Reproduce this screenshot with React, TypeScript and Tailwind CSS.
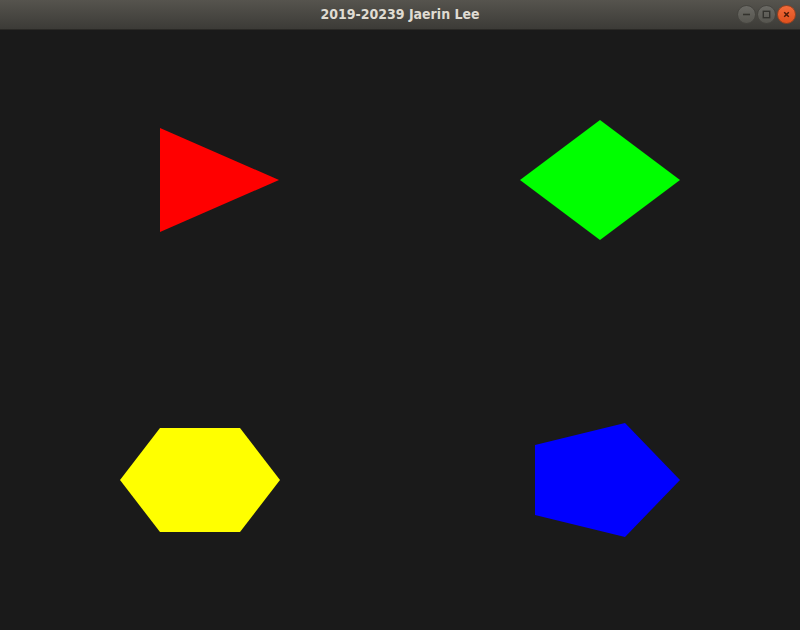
// Window with an OpenGL-style canvas of four filled polygons
const shapes = [
  { fill: "#ff0000", points: "160,98 279,150 160,202" },
  { fill: "#00ff00", points: "600,90 680,150 600,210 520,150" },
  { fill: "#ffff00", points: "160,398 240,398 280,450 240,502 160,502 120,450" },
  { fill: "#0000ff", points: "535,415 625,393 680,450 625,507 535,485" },
];

const TitleButton = ({ kind }: { kind: "min" | "max" | "close" }) => (
  <div
    className={
      kind === "close"
        ? "flex h-[19px] w-[19px] items-center justify-center rounded-full border border-[#9a4220] bg-gradient-to-b from-[#f26b3a] to-[#e0501c]"
        : "flex h-[19px] w-[19px] items-center justify-center rounded-full border border-[#45443f] bg-gradient-to-b from-[#6b6a65] to-[#56554f]"
    }
  >
    <svg width="11" height="11" viewBox="0 0 11 11">
      {kind === "min" && <path d="M2 5.5h7" stroke="#33322e" strokeWidth="1.6" />}
      {kind === "max" && (
        <rect x="2.3" y="2.3" width="6.4" height="6.4" fill="none" stroke="#33322e" strokeWidth="1.4" />
      )}
      {kind === "close" && (
        <path d="M3.2 3.2l4.6 4.6M7.8 3.2l-4.6 4.6" stroke="#4a1a08" strokeWidth="1.5" />
      )}
    </svg>
  </div>
);

export default function App() {
  return (
    <div className="flex h-[630px] w-[800px] flex-col bg-[#1a1a1a]">
      <div className="relative flex h-[30px] shrink-0 items-center justify-center border-b border-[#2a2926] bg-gradient-to-b from-[#56544e] to-[#3c3b37]">
        <span className="font-['DejaVu_Sans_Condensed','DejaVu_Sans',sans-serif] text-[14px] font-bold text-[#dfdbd2]">
          2019-20239 Jaerin Lee
        </span>
        <div className="absolute right-[4px] top-[5px] flex gap-[1px]">
          <TitleButton kind="min" />
          <TitleButton kind="max" />
          <TitleButton kind="close" />
        </div>
      </div>
      <svg width="800" height="600" viewBox="0 0 800 600" className="block">
        {shapes.map((s) => (
          <polygon key={s.fill} points={s.points} fill={s.fill} />
        ))}
      </svg>
    </div>
  );
}
